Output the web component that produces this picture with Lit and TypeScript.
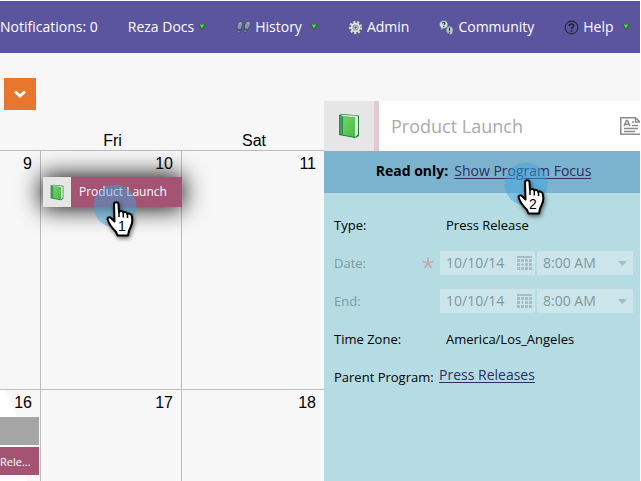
import { LitElement, html, svg, css, nothing } from "lit";
import { customElement, property } from "lit/decorators.js";

const book = html`<svg class="book" viewBox="0 0 22 26" aria-hidden="true">
  <defs>
    <linearGradient id="cover" x1="0" y1="0" x2="1" y2="1">
      <stop offset="0" stop-color="#6fd765" /><stop offset="1" stop-color="#4cb848" />
    </linearGradient>
  </defs>
  <path d="M1 2 L4 1 L21 2.500 L21 23 L17 25 L1 22 Z" fill="#1f7a35" />
  <path d="M4 1.800 L20 3 L17.500 4.500 L3 3 Z" fill="#eef3ee" />
  <path d="M17 4.500 L20 3 L20 21.500 L17 24 Z" fill="#dfe9df" />
  <path d="M1.500 2.500 L4.500 3 L4.500 21.800 L1.500 21 Z" fill="#3d9d62" />
  <path d="M5 3 L17 4.500 L17 24 L5 21.800 Z" fill="url(#cover)" />
</svg>`;

const foot = svg`<g fill="#8496a6" stroke="#3a4560" stroke-width=".9">
    <path d="M3.500 2 C6 .5 7.800 2.500 7 5.500 C6.500 7.500 5.400 8.800 5 10.500 L1.500 9.800 C.5 6.500 1.500 3.300 3.500 2 Z" />
    <path d="M1.400 10.800 L4.700 11.500 C4.600 15 .4 15 1.400 10.800 Z" />
    <path d="M12 1.500 C15.500 .3 16.300 3.500 15.200 6 C14.400 7.700 13 8.700 12.200 10.300 L9 9.200 C8.400 5.800 9.700 2.400 12 1.500 Z" />
    <path d="M8.700 10.200 L11.900 11.300 C11.200 14.600 7.200 13.900 8.700 10.200 Z" />
  </g>
  <path d="M3 4 Q4.500 2.800 5.500 4 M11.500 3.500 Q13 2.500 14 3.500" fill="none" stroke="#b9c6cf" stroke-width=".8" />`;

const gear = svg`<circle cx="8" cy="8" r="6.200" fill="none" stroke="#4d5560" stroke-width="3.400" stroke-dasharray="2.700 1.630" />
  <circle cx="8" cy="8" r="6" fill="none" stroke="#d5dade" stroke-width="2.400" stroke-dasharray="2.300 1.890" />
  <circle cx="8" cy="8" r="4.200" fill="#8f979e" stroke="#dfe3e6" stroke-width="1.800" />
  <circle cx="8" cy="8" r="1.800" fill="#59606a" stroke="#eef0f2" stroke-width=".8" />`;

const chat = svg`<path d="M5 0.500 A4.500 4.300 0 1 1 4 9 L2.500 11 L2 8 A4.500 4.300 0 0 1 5 .5 Z" fill="#d3dde0" stroke="#5c6a78" stroke-width=".6" />
  <path d="M11 6.500 A4.300 4.300 0 0 1 14.500 13 L14 15.800 L11.500 15 A4.300 4.300 0 0 1 11 6.500 Z" fill="#b9c9d0" stroke="#4a5868" stroke-width=".6" />
  <path d="M3.500 3.500 Q5 1.800 6.300 3.300 Q6.500 4.500 5 5.200 M5 6.500 V7.500" fill="none" stroke="#26303c" stroke-width="1.200" />
  <path d="M11.200 8.200 V11.500 M11.200 12.500 V13.600" fill="none" stroke="#26303c" stroke-width="1.300" />`;

const help = svg`<circle cx="8" cy="8" r="6.800" fill="none" stroke="#22222e" stroke-width="1.100" />
  <path d="M5.800 6.500 C5.800 3.600 10.500 3.600 10.300 6.400 C10.200 8 8 8 8 9.700 M8 10.800 V12.400"
    fill="none" stroke="#22222e" stroke-width="1.700" />`;

@customElement("nav-item")
export class NavItem extends LitElement {
  static styles = css`
    :host { display: block; flex: none; }
    .item {
      display: flex; align-items: center; gap: 4px;
      color: #fff; text-decoration: none; font-size: 14px; line-height: 20px; white-space: nowrap;
    }
    .icon { width: 15px; height: 15px; flex: none; }
    .arrow { width: 8px; height: 8px; flex: none; }
    .spaced { margin-left: 4px; }
  `;
  @property() label = "";
  @property({ type: Boolean }) menu = false;
  @property({ attribute: false }) icon: unknown = null;
  render() {
    return html`<a class="item" href="#">
      ${this.icon ? html`<svg class="icon" viewBox="0 0 16 16" aria-hidden="true">${this.icon}</svg>` : nothing}
      <span>${this.label}</span>
      ${this.menu
        ? html`<svg class="arrow ${this.icon ? "spaced" : ""}" viewBox="0 0 8 8" aria-hidden="true">
            <path d="M.5 1 H7.500 L4.500 7 H3.500 Z" fill="#246b32" />
            <path d="M1.500 1.500 H6.500 L4 5.500 Z" fill="#55d845" />
          </svg>`
        : nothing}
    </a>`;
  }
}

@customElement("step-pointer")
export class StepPointer extends LitElement {
  static styles = css`
    :host { display: block; width: 44px; height: 54px; pointer-events: none; }
    .art { display: block; width: 100%; height: 100%; overflow: visible; }
    .hand { filter: drop-shadow(1px 2px 2px rgba(0, 0, 0, 0.55)); }
    .num { font: 14px "Liberation Sans", Arial, sans-serif; }
  `;
  @property() step = "";
  render() {
    return html`<svg class="art" viewBox="0 0 44 54" aria-hidden="true">
      <circle cx="22" cy="22" r="21.500" fill="#3ba3dc" fill-opacity=".47" />
      <path class="hand"
        d="M21 20.500 C21 17.500 25.500 17.500 25.500 20.500 L26 28 C27 26.500 30 26.500 30.300 28.500 C31.500 27.500 34 28 34.300 30
           C36 29 38.500 30 38.800 32 C39.500 35 39.500 39 38 42 C37.500 44 36.500 45 36 47 L35 51.500 H24.500 L23 48
           C20 45 16 40 14.800 36 C14 34 16 32.500 18 34 L21.500 37.500 Z"
        fill="#fff" stroke="#000" stroke-width="2" stroke-linejoin="round" />
      <path d="M26 27 V33 M30.300 28.500 V33.500 M34.500 30 V34" stroke="#000" stroke-width="1.500" />
      <text class="num" x="29" y="47" text-anchor="middle">${this.step}</text>
    </svg>`;
  }
}

@customElement("app-root")
export class AppRoot extends LitElement {
  static styles = css`
    * { box-sizing: border-box; }
    :host {
      display: flex; flex-direction: column; min-height: 100vh; padding: 1px 1px 0 0;
      background: #fff; color: #000; overflow: hidden;
      font-family: "Open Sans", "Noto Sans", sans-serif;
    }
    .nav { display: flex; align-items: center; gap: 30px; height: 52px; background: #5b549e; margin: 0; }
    .main { flex: 1; display: flex; background: #f7f7f7; }
    .calendar { flex: 1; min-width: 0; display: flex; flex-direction: column; }
    .toggle {
      display: flex; align-items: center; justify-content: center; flex: none;
      width: 32px; height: 32px; margin: 25px 0 0 4px; padding: 0; border: 0; background: #e8762d;
    }
    .chevron { width: 14px; height: 10px; }

    .month {
      flex: 1; width: 100%; border-collapse: separate; border-spacing: 0; table-layout: fixed;
      font: 16px/20px "Liberation Sans", Arial, sans-serif;
    }
    .first { width: 41px; }
    .fri { width: 141px; }
    .month th {
      height: 41px; padding: 0 0 0 2px; font-weight: 400; line-height: 18px; vertical-align: bottom;
      border-bottom: 1px solid #bdbdbd;
    }
    .month td { height: 238px; padding: 0; vertical-align: top; border-right: 1px solid #bdbdbd; border-bottom: 1px solid #bdbdbd; }
    .month td:last-child { border-right: 0; }
    .month tr:last-child td { height: 92px; border-bottom: 0; }
    .month tr:first-child td { height: 238px; }
    .day { display: block; padding: 3px 8px 3px 0; text-align: right; }
    .glow { background: radial-gradient(80px 130px at -53px 89px, #fff 99%, transparent 100%); }
    .event {
      position: relative; display: flex; height: 30px; margin: 0 -1px 0 2px;
      background: #a55373; color: #fff; text-decoration: none;
      font: 12px/30px "Open Sans", "Noto Sans", sans-serif;
      box-shadow: 0 0 24px 1px #000;
    }
    .event .tile { display: flex; align-items: center; justify-content: center; width: 28px; background: #e6e6e6; }
    .event .book { width: 14px; height: 17px; }
    .event .name { padding-left: 8px; }
    .event step-pointer { position: absolute; left: 50px; top: 7px; }
    .bar { display: block; height: 28px; margin: 1px 1px 2px 0; background: #a5a5a5; }
    .chip {
      background: #a55373; color: #fff; text-decoration: none; overflow: hidden; white-space: nowrap;
      font: 11px/30px "Open Sans", "Noto Sans", sans-serif;
    }

    .panel { position: relative; width: 316px; flex: none; margin-top: 48px; background: #b5dce2; }
    .head { display: flex; align-items: center; height: 50px; background: #fff; }
    .head .tile {
      display: flex; align-items: center; justify-content: center; width: 55px; height: 50px;
      background: #e6e6e6; border-right: 5px solid #e4c9d2;
    }
    .head .book { width: 22px; height: 26px; }
    .title { flex: 1; margin: 0; padding-left: 12px; font-size: 18px; line-height: 24px; font-weight: 400; color: #aaa; }
    .detail { width: 20px; height: 18px; }
    .notice {
      display: flex; justify-content: center; gap: 6px; height: 42px; padding-left: 3px;
      background: #7bb3ce; font-size: 14px; line-height: 40px;
    }
    .link { color: #2f2c62; text-decoration: underline; text-underline-offset: 2px; }
    .notice .link { position: relative; }
    .notice step-pointer { position: absolute; left: 50px; top: 11px; }
    .form { padding: 13px 7px 0 10px; font-size: 13px; }
    .row { display: flex; align-items: center; height: 38px; }
    .label { width: 106px; white-space: nowrap; }
    .row.off .label { display: flex; justify-content: space-between; align-items: center; padding-right: 6px; color: #7d9a9f; }
    .value { padding-left: 6px; }
    .star { width: 12px; height: 12px; }
    .parent { font-size: 14px; line-height: 20px; padding-bottom: 5px; margin-left: -1px; }
    .field { position: relative; display: flex; align-items: center; flex: 1; min-width: 0; height: 24px; background: #cce5ea; }
    .date { flex: none; width: 95px; margin-right: 2px; }
    .box {
      flex: 1; width: 100%; min-width: 0; height: 24px; padding: 0 0 0 6px; margin: 0; border: 0; background: none;
      font: 14px/24px "Open Sans", "Noto Sans", sans-serif; color: #7d9a9f; opacity: 1; appearance: none;
    }
    .pick { display: flex; flex: none; padding: 0; margin-right: 3px; border: 0; background: none; }
    .cal { width: 15px; height: 14px; }
    .caret { width: 9px; height: 5px; flex: none; margin-right: 6px; }
  `;

  private grid() {
    const cells = [];
    for (let r = 0; r < 3; r++)
      for (let c = 0; c < 4; c++)
        cells.push(svg`<rect x=${c * 4} y=${3 + r * 4} width="3" height="3" />`);
    return html`<svg class="cal" viewBox="0 0 15 14" fill="#a6bec3" aria-hidden="true">
      <rect width="15" height="2" />${cells}
      <path d="M4 7 H5 V8 H4 Z M6 7 H7 V8 H6 Z M4 9 H5 V10 H4 Z M6 9 H7 V10 H6 Z" fill="#cce5ea" />
    </svg>`;
  }

  private dateRow(name: string, id: string, required: boolean) {
    return html`<div class="row off">
      <label class="label" for=${id}>${name}
        ${required
          ? html`<svg class="star" viewBox="0 0 12 12" aria-hidden="true">
              <path d="M6 6 V0.500 M6 6 L11.500 4.500 M6 6 L9.500 11 M6 6 L2.500 11 M6 6 L.5 4.500" stroke="#c0a9b0" stroke-width="1.800" />
            </svg>`
          : nothing}
      </label>
      <div class="field date">
        <input class="box" id=${id} value="10/10/14" disabled />
        <button class="pick" disabled aria-label="${name} calendar">${this.grid()}</button>
      </div>
      <div class="field">
        <select class="box" aria-label="${name} time" disabled><option>8:00 AM</option></select>
        <svg class="caret" viewBox="0 0 9 5" aria-hidden="true"><path d="M0 0 H9 L4.500 5 Z" fill="#a3bdc3" /></svg>
      </div>
    </div>`;
  }

  render() {
    return html`
      <nav class="nav">
        <nav-item label="Notifications: 0"></nav-item>
        <nav-item label="Reza Docs" menu></nav-item>
        <nav-item label="History" .icon=${foot} menu></nav-item>
        <nav-item label="Admin" .icon=${gear}></nav-item>
        <nav-item label="Community" .icon=${chat}></nav-item>
        <nav-item label="Help" .icon=${help} menu></nav-item>
      </nav>
      <main class="main">
        <section class="calendar">
          <button class="toggle" aria-label="Expand">
            <svg class="chevron" viewBox="0 0 14 10"><path d="M2 2.500 L7 7 L12 2.500" fill="none" stroke="#fff" stroke-width="3" /></svg>
          </button>
          <table class="month">
            <colgroup><col class="first" /><col class="fri" /><col /></colgroup>
            <thead><tr><th></th><th>Fri</th><th>Sat</th></tr></thead>
            <tbody>
              <tr>
                <td><span class="day">9</span></td>
                <td>
                  <span class="day">10</span>
                  <a class="event" href="#">
                    <span class="tile">${book}</span><span class="name">Product Launch</span>
                    <step-pointer step="1"></step-pointer>
                  </a>
                </td>
                <td><span class="day">11</span></td>
              </tr>
              <tr>
                <td class="glow">
                  <span class="day">16</span>
                  <span class="bar"></span>
                  <a class="bar chip" href="#">Rele...</a>
                </td>
                <td><span class="day">17</span></td>
                <td><span class="day">18</span></td>
              </tr>
            </tbody>
          </table>
        </section>
        <aside class="panel">
          <header class="head">
            <span class="tile">${book}</span>
            <h1 class="title">Product Launch</h1>
            <svg class="detail" viewBox="0 0 20 18" fill="none" stroke="#8c8c8c" aria-hidden="true">
              <path d="M20 17.300 H.8 V.8 H15.500 L20 5 M15.500 .8 V5 H20" stroke-width="1.500" />
              <path d="M4 9 L6.500 3.500 H7.500 L10 9 M5 7.300 H9" stroke-width="1.500" />
              <path d="M12 5 H14 M12 8.500 H18 M4 11.500 H18 M4 14.500 H15" stroke-width="1.500" />
            </svg>
          </header>
          <div class="notice">
            <b>Read only:</b>
            <a class="link" href="#">Show Program Focus<step-pointer step="2"></step-pointer></a>
          </div>
          <div class="form">
            <div class="row"><span class="label">Type:</span><span class="value">Press Release</span></div>
            ${this.dateRow("Date:", "date", true)} ${this.dateRow("End:", "end", false)}
            <div class="row"><span class="label">Time Zone:</span><span class="value">America/Los_Angeles</span></div>
            <div class="row"><span class="label">Parent Program:</span><a class="link parent" href="#">Press Releases</a></div>
          </div>
        </aside>
      </main>
    `;
  }
}
